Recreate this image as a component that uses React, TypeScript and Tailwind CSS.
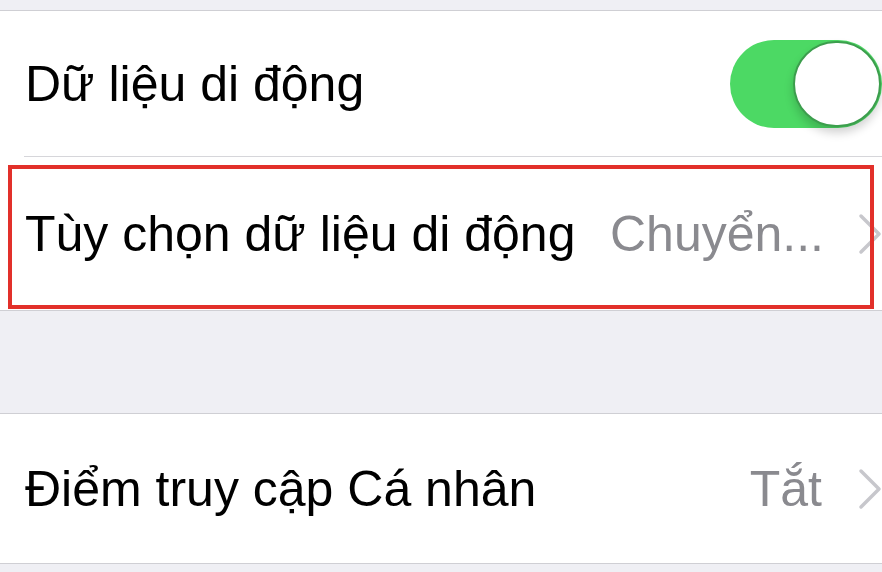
import React from 'react'

function Chevron() {
  return (
    <svg width="24" height="42" viewBox="0 0 24 42" fill="none" className="shrink-0">
      <path d="M3 3 L21 21 L3 39" stroke="#c7c7cc" strokeWidth="3.5" strokeLinecap="round" strokeLinejoin="round" />
    </svg>
  )
}

function Toggle() {
  return (
    <div className="relative h-[88px] w-[152px] shrink-0 rounded-full bg-[#4cd964]">
      <div className="absolute left-[63px] top-[1px] h-[86px] w-[88px] rounded-full border-2 border-[#3c9e4d] bg-white shadow-[0_6px_10px_rgba(0,0,0,0.18)]" />
    </div>
  )
}

export default function App() {
  return (
    <div className="h-[572px] w-[882px] overflow-hidden bg-[#efeff4] font-['Liberation_Sans',Arial,sans-serif] text-[50px] leading-none text-black">
      <div className="h-[10px]" />
      <div className="border-y border-[#cfcfd4] bg-white">
        <div className="flex h-[145px] items-center justify-between pl-[25px]">
          <span>Dữ liệu di động</span>
          <Toggle />
        </div>
        <div className="ml-[24px] h-px bg-[#d6d6da]" />
        <div className="relative flex h-[153px] items-center pl-[25px]">
          <span className="flex-1">Tùy chọn dữ liệu di động</span>
          <span className="text-[#8a8a8f]">Chuyển...</span>
          <div className="ml-[34px]">
            <Chevron />
          </div>
          <div className="absolute left-[8px] top-[8px] h-[144px] w-[866px] border-[4px] border-[#e2302a]" />
        </div>
      </div>
      <div className="h-[102px]" />
      <div className="border-y border-[#cfcfd4] bg-white">
        <div className="flex h-[149px] items-center pl-[25px]">
          <span className="flex-1">Điểm truy cập Cá nhân</span>
          <span className="text-[#8a8a8f]">Tắt</span>
          <div className="ml-[36px]">
            <Chevron />
          </div>
        </div>
      </div>
    </div>
  )
}
